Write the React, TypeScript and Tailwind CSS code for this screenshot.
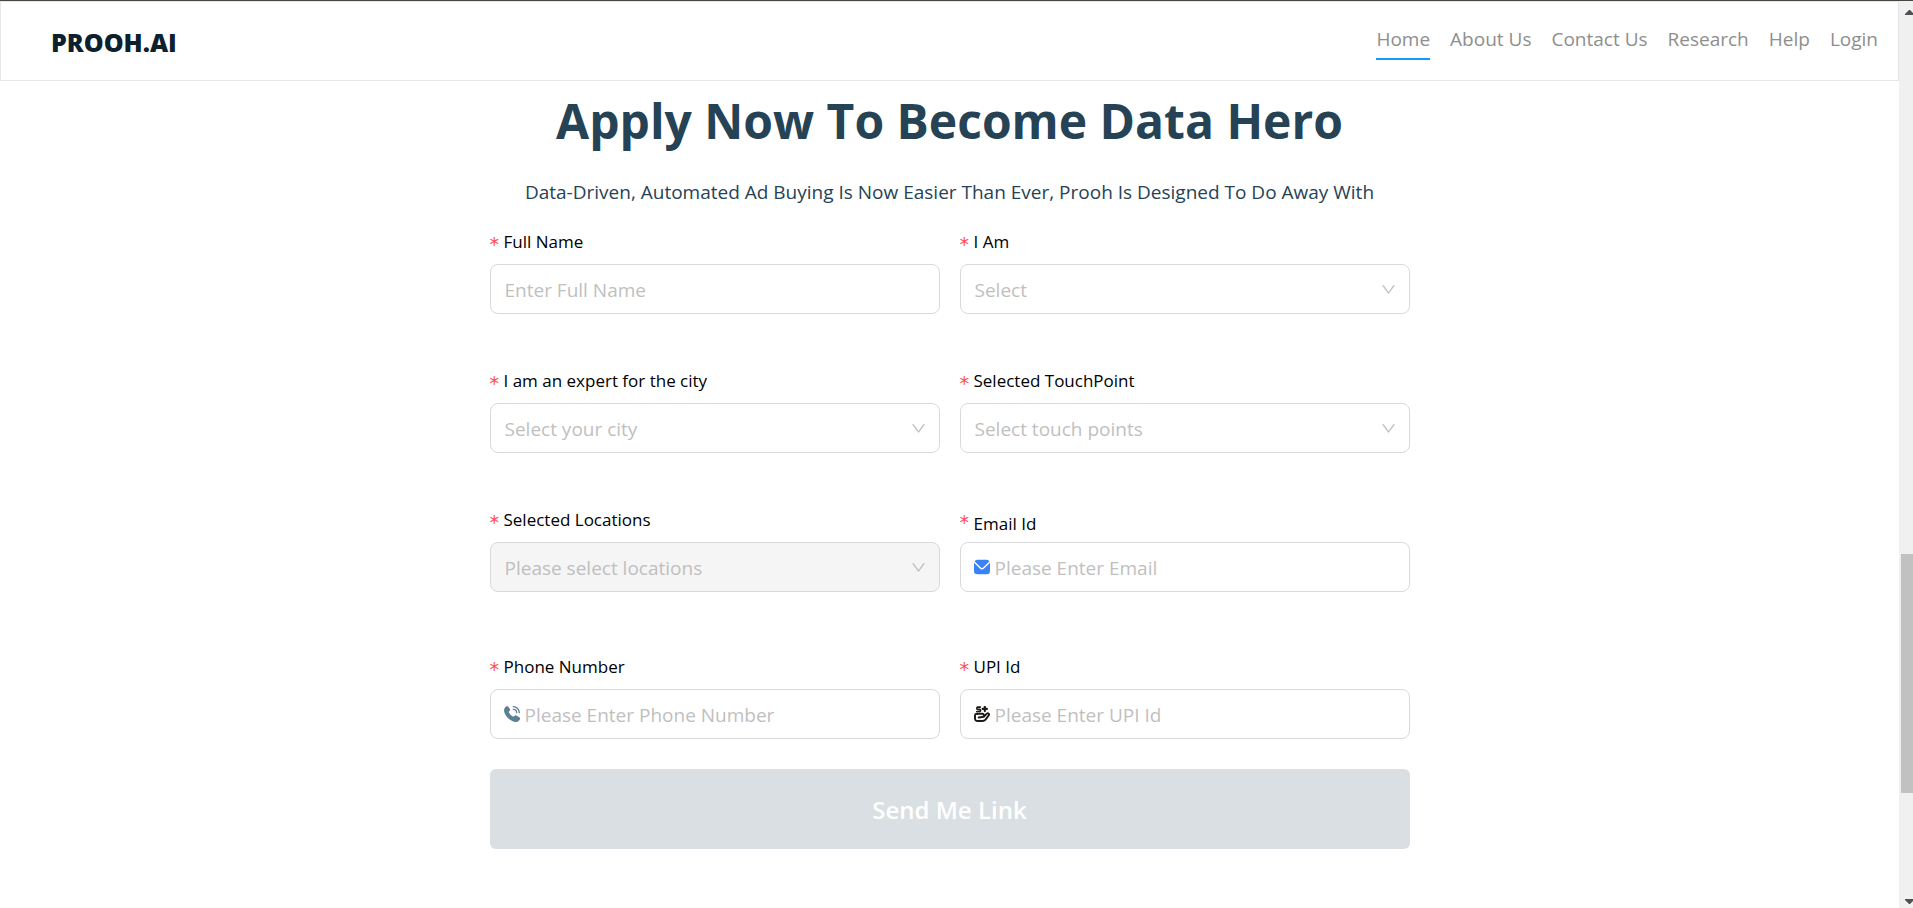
import type { ReactNode } from "react";

const navLinks = ["Home", "About Us", "Contact Us", "Research", "Help", "Login"];

function MailIcon() {
  return (
    <svg viewBox="0 0 24 24" className="size-4 shrink-0 fill-[#3b82f6]" aria-hidden="true">
      <path d="M23.954,5.542,15.536,13.96a5.007,5.007,0,0,1-7.072,0L.046,5.542C.032,5.7,0,5.843,0,6V18a5.006,5.006,0,0,0,5,5H19a5.006,5.006,0,0,0,5-5V6C24,5.843,23.968,5.7,23.954,5.542Z" />
      <path d="M14.122,12.546l9.134-9.135A4.986,4.986,0,0,0,19,1H5A4.986,4.986,0,0,0,.744,3.411l9.134,9.135A3.007,3.007,0,0,0,14.122,12.546Z" />
    </svg>
  );
}

function PhoneIcon() {
  return (
    <svg viewBox="0 0 24 24" className="size-4 shrink-0 fill-[#5b8094]" aria-hidden="true">
      <path d="M13,1a1,1,0,0,1,1-1A10.011,10.011,0,0,1,24,10a1,1,0,0,1-2,0,8.009,8.009,0,0,0-8-8A1,1,0,0,1,13,1Zm1,5a4,4,0,0,1,4,4,1,1,0,0,0,2,0,6.006,6.006,0,0,0-6-6,1,1,0,0,0,0,2Zm9.093,10.739a3.1,3.1,0,0,1,0,4.378l-.91,1.049c-8.19,7.841-28.12-12.084-20.4-20.3l1.15-1A3.081,3.081,0,0,1,6.26.906c.031.031,1.884,2.438,1.884,2.438a3.1,3.1,0,0,1-.007,4.282L6.979,9.082a12.781,12.781,0,0,0,6.931,6.945l1.465-1.165a3.1,3.1,0,0,1,4.281-.006S23.062,16.708,23.093,16.739Z" />
    </svg>
  );
}

function PaymentIcon() {
  return (
    <svg
      viewBox="0 0 24 24"
      className="size-4 shrink-0 fill-none stroke-[#1c1917]"
      strokeWidth="2.9"
      strokeLinecap="round"
      strokeLinejoin="round"
      aria-hidden="true"
    >
      <path d="M9.500 1.800H5.800a1.500 1.500 0 0 0 0 3.200h2.400a1.600 1.600 0 0 1 0 3.300H4.200" strokeWidth="2.5" />
      <path d="M16.200 1.200v6.400M13 4.400h6.400" strokeWidth="3.2" />
      <path d="M5 11.500H4A2.800 2.800 0 0 0 1.500 14.300V19.500A3.300 3.300 0 0 0 4.500 22.500H12.500C14.500 22.500 16 22 17.300 20.500L22 14.200C23.500 12.200 21.200 9.700 19.300 11.500L15 15.800" />
      <path d="M5 11.500H12.500A2.300 2.300 0 0 1 12.500 16.400L7 17.300" />
    </svg>
  );
}

function ChevronDown() {
  return (
    <svg
      viewBox="64 64 896 896"
      className="pointer-events-none size-[15px] shrink-0 fill-[#bfbfbf] [grid-area:1/1] mr-3.5 self-center justify-self-end"
      aria-hidden="true"
    >
      <path d="M884 256h-75c-5.1 0-9.9 2.5-12.9 6.6L512 654.2 227.9 262.6c-3-4.1-7.8-6.6-12.900-6.600h-75c-6.500 0-10.300 7.400-6.500 12.700l352.600 486.100c12.800 17.600 39 17.600 51.700 0l352.600-486.100c3.900-5.300.1-12.700-6.400-12.700z" />
    </svg>
  );
}

type FieldProps = { id: string; label: string; low?: boolean; children: ReactNode };

function Field({ id, label, low, children }: FieldProps) {
  return (
    <div>
      <div className="flex h-11 items-center gap-1">
        <span className="w-2.5 pt-1 font-[DejaVu_Sans,sans-serif] text-[19px] text-[#ff4d4f]" aria-hidden="true">
          *
        </span>
        <label htmlFor={id} className={low ? "pt-2 text-[17px] text-black" : "text-[17px] text-black"}>
          {label}
        </label>
      </div>
      {children}
    </div>
  );
}

type InputProps = { id: string; type: string; placeholder: string; icon?: ReactNode };

function TextInput({ id, type, placeholder, icon }: InputProps) {
  return (
    <div className="flex h-[50px] items-center gap-1 rounded-lg border border-[#d9d9d9] bg-white px-[13px]">
      {icon}
      <input
        id={id}
        type={type}
        placeholder={placeholder}
        required
        className="h-full min-w-0 flex-1 bg-transparent pt-0.5 pl-px text-[19px] outline-none placeholder:text-[#bfbfbf]"
      />
    </div>
  );
}

type SelectProps = { id: string; placeholder: string; options: string[]; disabled?: boolean };

function SelectInput({ id, placeholder, options, disabled }: SelectProps) {
  return (
    <div className="grid">
      <select
        id={id}
        defaultValue=""
        disabled={disabled}
        required
        className="h-[50px] w-full appearance-none rounded-lg border border-[#d9d9d9] bg-white pt-0.5 pr-10 pl-3.5 text-[19px] text-[#bfbfbf] opacity-100 outline-none [grid-area:1/1] disabled:bg-[#f5f5f5]"
      >
        <option value="" disabled>
          {placeholder}
        </option>
        {options.map((option) => (
          <option key={option}>{option}</option>
        ))}
      </select>
      <ChevronDown />
    </div>
  );
}

function Header() {
  return (
    <header className="flex h-20 items-start justify-between border border-gray-200 pr-5 pl-[50px]">
      <a href="#home" className="pt-[22px] text-[25px] leading-9 font-extrabold text-[#0c212d]">
        PROOH.AI
      </a>
      <nav className="flex gap-5 pt-5 text-[19px] leading-[34px] text-[#8e8e8e]">
        {navLinks.map((link, index) => (
          <a
            key={link}
            href={"#" + link.toLowerCase().replace(" ", "-")}
            className={index === 0 ? "border-b-2 border-[#129bff] pb-0.5" : "border-b-2 border-transparent pb-0.5"}
          >
            {link}
          </a>
        ))}
      </nav>
    </header>
  );
}

function ScrollTrack() {
  return (
    <div className="flex w-3.5 flex-col overflow-hidden bg-[#f0f0f0] pl-0.5" aria-hidden="true">
      <svg viewBox="0 0 12 17" className="h-[17px] w-3 shrink-0 fill-[#505050]">
        <path d="M4 14v-1l4-4h1l4 4v1z" />
      </svg>
      <div className="flex-[536]" />
      <div className="flex-[239] bg-[#c1c1c1]" />
      <div className="flex-[98]" />
      <svg viewBox="0 0 12 17" className="h-[17px] w-3 shrink-0 fill-[#505050]">
        <path d="M4 8v1l4 4h1l4-4v-1z" />
      </svg>
    </div>
  );
}

export default function App() {
  return (
    <div className="flex min-h-screen border-t border-[#42483f] bg-white font-[Open_Sans,sans-serif]">
      <div className="min-w-0 flex-1">
        <Header />
        <main className="mx-auto w-full max-w-[920px]">
          <h1 className="pt-2 text-center text-5xl leading-[64px] font-bold text-[#264356]">
            Apply Now To Become Data Hero
          </h1>
          <p className="pt-[23px] text-center text-[19px] leading-8 text-[#264356]">
            Data-Driven, Automated Ad Buying Is Now Easier Than Ever, Prooh Is Designed To Do Away With
          </p>
          <form className="pt-3" onSubmit={(event) => event.preventDefault()}>
            <div className="grid grid-cols-2 gap-x-5 gap-y-[45px]">
              <Field id="name" label="Full Name">
                <TextInput id="name" type="text" placeholder="Enter Full Name" />
              </Field>
              <Field id="role" label="I Am">
                <SelectInput id="role" placeholder="Select" options={["Student", "Professional"]} />
              </Field>
              <Field id="city" label="I am an expert for the city">
                <SelectInput id="city" placeholder="Select your city" options={["Delhi", "Mumbai"]} />
              </Field>
              <Field id="touchpoint" label="Selected TouchPoint">
                <SelectInput id="touchpoint" placeholder="Select touch points" options={["Airport", "Mall"]} />
              </Field>
              <Field id="locations" label="Selected Locations">
                <SelectInput id="locations" placeholder="Please select locations" options={[]} disabled />
              </Field>
              <Field id="email" label="Email Id" low>
                <TextInput id="email" type="email" placeholder="Please Enter Email" icon={<MailIcon />} />
              </Field>
            </div>
            <div className="grid grid-cols-2 gap-x-5 pt-[53px]">
              <Field id="phone" label="Phone Number">
                <TextInput id="phone" type="tel" placeholder="Please Enter Phone Number" icon={<PhoneIcon />} />
              </Field>
              <Field id="upi" label="UPI Id">
                <TextInput id="upi" type="text" placeholder="Please Enter UPI Id" icon={<PaymentIcon />} />
              </Field>
            </div>
            <button
              type="submit"
              className="mt-[30px] h-20 w-full rounded-md bg-[#dadfe3] pt-0.5 text-2xl font-semibold text-white"
            >
              Send Me Link
            </button>
          </form>
        </main>
      </div>
      <ScrollTrack />
    </div>
  );
}
